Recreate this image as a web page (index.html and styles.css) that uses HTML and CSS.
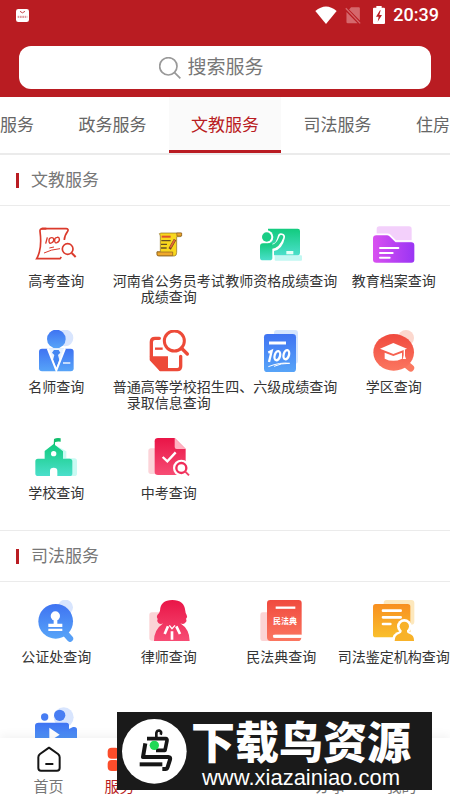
FILE: index.html
```
<!DOCTYPE html>
<html lang="zh-CN">
<head>
    <meta charset="UTF-8">
    <meta name="viewport" content="width=device-width, initial-scale=1.0">
    <title>服务</title>
    <link rel="stylesheet" href="styles.css">
</head>
<body>
    <svg class="defs" aria-hidden="true">
        <defs>
            <linearGradient id="green" x2="0" y2="1"><stop stop-color="#12cb7e"/><stop offset="1" stop-color="#4bdfcb"/></linearGradient>
            <linearGradient id="purple"><stop stop-color="#d950f0"/><stop offset="1" stop-color="#9a35f4"/></linearGradient>
            <linearGradient id="blue" x2="0" y2="1"><stop stop-color="#3f73f2"/><stop offset="1" stop-color="#57a4f8"/></linearGradient>
            <linearGradient id="red" x2="0" y2="1"><stop stop-color="#f04a3e"/><stop offset="1" stop-color="#fb7660"/></linearGradient>
            <linearGradient id="pink" x2="0" y2="1"><stop stop-color="#e91547"/><stop offset="1" stop-color="#f74c74"/></linearGradient>
            <linearGradient id="orange" x2="0" y2="1"><stop stop-color="#f88f20"/><stop offset="1" stop-color="#f9bf2c"/></linearGradient>
        </defs>
    </svg>

    <header class="header">
        <div class="status-bar">
            <svg class="app-icon" viewBox="0 0 39 39">
                <rect width="39" height="39" rx="7" fill="#fff"/>
                <path d="M12 7q7 9 15 0" fill="none" stroke="#c4474b" stroke-width="3"/>
                <path d="M5 22h29M5 25h29" stroke="#d98a8d" stroke-width="3" stroke-dasharray="5 2"/>
            </svg>
            <div class="status-right">
                <svg class="wifi" viewBox="0 0 66 54"><path d="M1 15Q33-12 65 15L33 54z" fill="#fff"/></svg>
                <svg class="sim" viewBox="0 0 48 52">
                    <path d="M18 1h24q3 0 3 3v37L12 8zM4 15l34 35H8q-4 0-4-4z" fill="#d5686c"/>
                    <path d="M2 4l44 46" stroke="#d5686c" stroke-width="4"/>
                </svg>
                <svg class="battery" viewBox="0 0 36 54">
                    <path d="M10 5V0h16v5h7q3 0 3 3v43q0 3-3 3H3q-3 0-3-3V8q0-3 3-3z" fill="#fff"/>
                    <path d="M21 13L9 32h8l-3 15 13-20h-8l4-14z" fill="#b91c22"/>
                </svg>
                <span class="time">20:39</span>
            </div>
        </div>
        <label class="search">
            <svg class="search-icon" viewBox="0 0 66 66"><circle cx="28" cy="28" r="26" fill="none" stroke="#999" stroke-width="5"/><path d="M46 46l18 18" stroke="#999" stroke-width="5"/></svg>
            <input type="text" placeholder="搜索服务" aria-label="搜索服务">
        </label>
    </header>

    <nav class="tabs">
        <a href="#">民生服务</a>
        <a href="#">政务服务</a>
        <a href="#education" class="active">文教服务</a>
        <a href="#justice">司法服务</a>
        <a href="#">住房服务</a>
    </nav>

    <main class="content">
        <section class="section" id="education">
            <h2>文教服务</h2>
            <div class="grid">
                <a href="#" class="item">
                    <svg viewBox="106 27 126 126" fill="none" stroke="#db3a2c" stroke-width="5">
                        <path d="M194 75q0-12 10-26 4-8-5-8h-70q-9 0-8 8 5 38-2 62-4 14-8 20h70l4-5"/>
                        <path d="M126 41h14" stroke-width="6"/>
                        <path d="M143 67l-5 19M155 68q-8 1-7 11 1 8 7 5 9-4 7-12-1-5-7-4zM172 67q-8 1-7 11 1 8 7 5 9-4 7-12-1-5-7-4z" stroke-width="4"/>
                        <path d="M149 99l14-3M133 114q22-11 48-13" stroke-width="3"/>
                        <circle cx="204" cy="102" r="16"/>
                        <path d="M216 114l12 12" stroke-width="6"/>
                    </svg>
                    <span>高考查询</span>
                </a>
                <a href="#" class="item">
                    <svg viewBox="443 27 126 126">
                        <path d="M482 54h61v8q0 4-6 3h-8v47q0 11-7 11h-48q-6-2-4-13h10V66q0-7-3-10z" fill="#f8d71e" stroke="#8a6a22" stroke-width="2"/>
                        <path d="M529 54h15v9h-14zM470 111h47v11h-46z" fill="#efa92b" stroke="#8a5a24" stroke-width="2"/>
                        <path d="M484 65h27" stroke="#de522a" stroke-width="6"/>
                        <path d="M483 77h28M482 88h18M482 99h17" stroke="#6a5120" stroke-width="4"/>
                        <path d="M524 74l-16 28" stroke="#754126" stroke-width="8"/>
                        <path d="M523 75l-13 23" stroke="#e76a31" stroke-width="5"/>
                    </svg>
                    <span>河南省公务员考试成绩查询</span>
                </a>
                <a href="#" class="item">
                    <svg viewBox="106 27 126 126">
                        <rect x="150" y="121" width="82" height="16" rx="3" fill="#c2f8f2"/>
                        <rect x="124" y="41" width="102" height="80" rx="7" fill="url(#green)"/>
                        <rect x="185" y="108" width="21" height="10" fill="#e6fff7"/>
                        <path d="M104 38h26v50h-26zM104 88h44v52h-44z" fill="#fff"/>
                        <path d="M146 97q18-3 24-31" fill="none" stroke="#fff" stroke-width="22" stroke-linecap="round"/>
                        <path d="M142 95q18-2 28-29" fill="none" stroke="#24cf8e" stroke-width="12" stroke-linecap="round"/>
                        <circle cx="126" cy="66" r="20" fill="#fff"/>
                        <circle cx="126" cy="66" r="14" fill="#1bcd86"/>
                        <path d="M115 85h28v43q0 8-8 8h-20q-9 0-9-8V94q0-9 9-9z" fill="url(#green)"/>
                    </svg>
                    <span>教师资格成绩查询</span>
                </a>
                <a href="#" class="item">
                    <svg viewBox="443 27 126 126">
                        <rect x="454" y="34" width="105" height="60" rx="8" fill="#f3d0fb"/>
                        <path d="M443 71q0-11 11-11h31q5 0 9 5l17 17h47q9 0 9 9v43q0 9-9 9H453q-10 0-10-9z" fill="url(#purple)"/>
                        <path d="M443 58h44q4 0 7 3l17 17h57" fill="none" stroke="#fff" stroke-width="5"/>
                        <path d="M464 99h55M464 114h38M464 128h29" stroke="#fff" stroke-width="6" stroke-linecap="round"/>
                    </svg>
                    <span>教育档案查询</span>
                </a>
                <a href="#" class="item">
                    <svg viewBox="106 30 126 126">
                        <circle cx="196" cy="54" r="25" fill="#d8e5fe"/>
                        <circle cx="170" cy="57" r="28" fill="url(#blue)"/>
                        <path d="M127 86h86q9 0 9 9v50q0 9-9 9h-86q-9 0-9-9V95q0-9 9-9z" fill="url(#blue)"/>
                        <path d="M144 85h51l-26 64z" fill="#e8f3ff"/>
                        <path d="M163 90h14l5 8-7 7 4 15-9 24-10-24 4-15-7-7z" fill="#4387f3"/>
                        <path d="M144 85l26 66 26-66" fill="none" stroke="#fff" stroke-width="6"/>
                        <path d="M190 129h22" stroke="#fff" stroke-width="4"/>
                    </svg>
                    <span>名师查询</span>
                </a>
                <a href="#" class="item">
                    <svg viewBox="443 30 126 126" fill="none" stroke="#ed4a38" stroke-width="10">
                        <path d="M477 55h-13q-11 0-11 11v53l28 30h50q10 0 10-10v-30" stroke-linecap="round" stroke-linejoin="round"/>
                        <path d="M448 109h55v43h-25z" fill="#ed4a38" stroke="none"/>
                        <path d="M464 86h23" stroke-width="7"/>
                        <circle cx="522" cy="63" r="30" stroke-width="9"/>
                        <path d="M543 84l18 18" stroke-width="10" stroke-linecap="round"/>
                    </svg>
                    <span>普通高等学校招生录取信息查询</span>
                </a>
                <a href="#" class="item">
                    <svg viewBox="106 30 126 126">
                        <rect x="148" y="30" width="72" height="101" rx="9" fill="#d5e5fe"/>
                        <rect x="118" y="42" width="96" height="114" rx="10" fill="url(#blue)"/>
                        <path d="M133 69h51" stroke="#fff" stroke-width="9"/>
                        <g fill="none" stroke="#fff" stroke-width="7">
                            <path d="M131 98l10-5-8 33"/>
                            <ellipse cx="158" cy="107" rx="8" ry="14" transform="rotate(15 158 107)"/>
                            <ellipse cx="185" cy="104" rx="8" ry="14" transform="rotate(15 185 104)"/>
                            <path d="M131 140q35-14 64-10-25-1-47 9" stroke-width="3"/>
                        </g>
                    </svg>
                    <span>四、六级成绩查询</span>
                </a>
                <a href="#" class="item">
                    <svg viewBox="443 30 126 126">
                        <circle cx="542" cy="54" r="24" fill="#fcd8ce"/>
                        <path d="M535 127l21 17" stroke="#fa7860" stroke-width="21" stroke-linecap="round"/>
                        <ellipse cx="505" cy="97" rx="61" ry="55" fill="url(#red)"/>
                        <path d="M464 86l40-17 41 17-41 16z" fill="#fff"/>
                        <path d="M478 98l26 10 26-10v18q-26 13-52 0z" fill="#fff"/>
                        <path d="M537 88v24" stroke="#fff" stroke-width="4"/>
                        <path d="M537 102l5 15h-10z" fill="#fff"/>
                    </svg>
                    <span>学区查询</span>
                </a>
                <a href="#" class="item">
                    <svg viewBox="106 33 126 126">
                        <path d="M167 61l33 18v21h24q8 0 8 8v38q0 7-8 7h-40z" fill="#c9faf3"/>
                        <path d="M163 42q9-5 20-2v10q-10-2-17 2v8h-4z" fill="#13be6d"/>
                        <path d="M162 57l28 22v22h20q8 0 8 8v37q0 7-8 7h-37v-16q0-9-11-9t-11 9v16h-35q-9 0-9-7v-37q0-8 8-8h20V78z" fill="url(#green)"/>
                        <circle cx="162" cy="86" r="8" fill="#fff"/>
                    </svg>
                    <span>学校查询</span>
                </a>
                <a href="#" class="item">
                    <svg viewBox="443 33 126 126">
                        <rect x="444" y="70" width="50" height="77" rx="8" fill="#fcd4d9"/>
                        <path d="M473 39h50l33 33v70q0 8-8 8h-75q-10 0-10-9V49q0-10 10-10z" fill="url(#pink)"/>
                        <path d="M523 39l33 33h-27q-6 0-6-6z" fill="#ffb2c1"/>
                        <path d="M487 96l14 13 25-27" fill="none" stroke="#fff" stroke-width="7"/>
                        <circle cx="543" cy="129" r="25" fill="#fff"/>
                        <circle cx="543" cy="129" r="15" fill="none" stroke="#f02d5a" stroke-width="7"/>
                        <path d="M554 139l12 12" stroke="#f24167" stroke-width="6"/>
                    </svg>
                    <span>中考查询</span>
                </a>
            </div>
        </section>

        <section class="section" id="justice">
            <h2>司法服务</h2>
            <div class="grid">
                <a href="#" class="item">
                    <svg viewBox="106 30 126 126">
                        <circle cx="197" cy="52" r="23" fill="#d8e5fe"/>
                        <path d="M197 130l14 16" stroke="#569ff7" stroke-width="19" stroke-linecap="round"/>
                        <circle cx="168" cy="94" r="52" fill="url(#blue)"/>
                        <circle cx="167" cy="78" r="14" fill="#fff"/>
                        <path d="M162 87h11v14h15v10h-42v-10h16zM146 116h42v7h-42z" fill="#fff"/>
                    </svg>
                    <span>公证处查询</span>
                </a>
                <a href="#" class="item">
                    <svg viewBox="443 30 126 126">
                        <rect x="447" y="67" width="50" height="85" rx="8" fill="#fbd4d6"/>
                        <path d="M479 62q1-32 37-32t39 33q0 6 4 12 4 7-2 12 4 7-3 12-5 5-14 1 28 18 28 53H461q0-34 28-53-9 4-15-1-6-6-2-12-5-5-1-12 7-7 8-13z" fill="url(#pink)"/>
                        <path d="M503 109l-10 23M528 109l11 23M515 124v25" stroke="#fff" stroke-width="8"/>
                        <path d="M507 106l8 10 9-10" fill="none" stroke="#fff" stroke-width="4"/>
                    </svg>
                    <span>律师查询</span>
                </a>
                <a href="#" class="item">
                    <svg viewBox="106 30 126 126">
                        <rect x="107" y="67" width="40" height="86" rx="7" fill="#fcd4d5"/>
                        <path d="M137 30h85q9 0 9 9v95h-78q-9 0-9 4t9 5h77q-1 10-10 10h-82q-11 0-11-11V40q0-10 10-10z" fill="url(#red)"/>
                        <path d="M146 139h84" stroke="#fff" stroke-width="9"/>
                        <path d="M153 53h59" stroke="#fff" stroke-width="7"/>
                        <text class="book-text" x="181" y="103" text-anchor="middle">民法典</text>
                    </svg>
                    <span>民法典查询</span>
                </a>
                <a href="#" class="item">
                    <svg viewBox="443 30 126 126">
                        <rect x="475" y="30" width="92" height="74" rx="9" fill="#fde8bd"/>
                        <rect x="443" y="42" width="112" height="100" rx="8" fill="url(#orange)"/>
                        <path d="M473 62h53M473 82h53M473 102h22" stroke="#fff" stroke-width="8" stroke-linecap="round"/>
                        <circle cx="537" cy="109" r="22" fill="#fff"/>
                        <path d="M500 156q0-28 24-32h26q20 5 20 32z" fill="#fff"/>
                        <circle cx="537" cy="109" r="14" fill="#f8b229"/>
                        <path d="M529 116h16v9q0 5 7 6 14 4 14 20v2h-58q0-18 14-22 7-2 7-7z" fill="#f8b229"/>
                    </svg>
                    <span>司法鉴定机构查询</span>
                </a>
                <a href="#" class="item" aria-label="视频">
                    <svg viewBox="106 18 126 126">
                        <circle cx="192" cy="52" r="30" fill="#d8e5fe"/>
                        <circle cx="135" cy="51" r="11" fill="#477df3"/>
                        <circle cx="180" cy="46" r="17" fill="#477df3"/>
                        <path d="M117 68h83q8 0 8 8v11l12-6q12-2 12 8v46q-5 6-24-7-1 12-10 12h-82q-10 0-10-10V77q0-9 11-9z" fill="url(#blue)"/>
                        <path d="M149 83l31 21-31 20z" fill="#fff"/>
                    </svg>
                </a>
            </div>
        </section>
    </main>

    <nav class="bottom-nav">
        <a href="#">
            <svg viewBox="0 0 78 78" fill="none" stroke="#151515" stroke-width="6" stroke-linejoin="round">
                <path d="M39 5L12 24q-5 4-5 10v32q0 8 8 8h48q8 0 8-8V34q0-6-5-10z"/>
                <path d="M28 54h24"/>
            </svg>
            <span>首页</span>
        </a>
        <a href="#" class="active">
            <svg viewBox="0 0 78 78" fill="#fb4d2b">
                <rect x="2" y="5" width="35" height="33" rx="12"/>
                <rect x="41" y="5" width="35" height="33" rx="12"/>
                <rect x="2" y="42" width="35" height="33" rx="12"/>
                <rect x="41" y="42" width="35" height="33" rx="12"/>
            </svg>
            <span>服务</span>
        </a>
        <a href="#" class="push">
            <svg viewBox="0 0 78 78" fill="none" stroke="#151515" stroke-width="6"><rect x="10" y="6" width="58" height="66" rx="8"/></svg>
            <span>办事</span>
        </a>
        <a href="#">
            <svg viewBox="0 0 78 78" fill="none" stroke="#151515" stroke-width="6"><circle cx="39" cy="24" r="17"/><path d="M8 72q0-25 31-25t31 25z"/></svg>
            <span>我的</span>
        </a>
    </nav>

    <div class="watermark">
        <svg viewBox="0 0 195 195">
            <circle cx="97" cy="97" r="97" fill="#fff"/>
            <g fill="none" stroke="#161616" stroke-width="11" stroke-linejoin="round">
                <path d="M103 55V42q2-9 10-7 7 3 3 12" stroke-width="8"/>
                <path d="M75 59h56q5 0 4 6l-6 29h-27"/>
                <path d="M70 73l-7 41h76q7 0 5 8l-7 22q-2 7-9 6h-7" stroke-width="12"/>
                <path d="M53 136h68" stroke-width="12"/>
            </g>
            <circle cx="97" cy="79" r="14" fill="#20d856"/>
        </svg>
        <div class="watermark-text">
            <strong>下载鸟资源</strong>
            <span>www.xiazainiao.com</span>
        </div>
    </div>
</body>
</html>
```
FILE: styles.css
```
* {
    box-sizing: border-box;
}
body {
    font-family: Roboto, "Noto Sans CJK SC", sans-serif;
    margin: 0;
    height: 100vh;
    display: flex;
    flex-direction: column;
    position: relative;
    overflow: hidden;
    background-color: #fff;
    color: #333;
}
a {
    color: inherit;
    text-decoration: none;
}
svg {
    display: block;
    flex: none;
}
.defs {
    position: absolute;
    width: 0;
    height: 0;
}

/* header */
.header {
    flex: none;
    padding: 0 19px 8px;
    background-color: #b91c22;
}
.status-bar {
    display: flex;
    align-items: center;
    justify-content: space-between;
    height: 30px;
    margin: 0 -8px 16px -3px;
    color: #fff;
}
.status-right {
    display: flex;
    align-items: center;
    gap: 8px;
}
.app-icon {
    width: 13px;
    height: 13px;
}
.wifi {
    width: 22px;
    height: 18px;
}
.sim {
    width: 16px;
    height: 17px;
}
.battery {
    width: 12px;
    height: 18px;
    margin-left: 4px;
}
.time {
    font-size: 18px;
    font-weight: 500;
    line-height: 30px;
}
.search {
    display: flex;
    align-items: center;
    justify-content: center;
    gap: 7px;
    height: 43px;
    padding-right: 28px;
    border-radius: 12px;
    background-color: #fff;
}
.search-icon {
    width: 22px;
    height: 22px;
}
.search input {
    width: 76px;
    padding: 0;
    border: 0;
    outline: 0;
    background: none;
    font: inherit;
    font-size: 19px;
    color: #333;
}
.search input::placeholder {
    color: #777;
}

/* category tabs */
.tabs {
    flex: none;
    display: flex;
    justify-content: center;
    overflow: hidden;
    border-bottom: 2px solid #ebebeb;
    color: #666;
}
.tabs a {
    flex: 0 0 25%;
    height: 56px;
    border-bottom: 3px solid transparent;
    font-size: 17px;
    line-height: 57px;
    text-align: center;
}
.tabs .active {
    color: #b91c22;
    background-color: #fafafa;
    border-color: #b91c22;
}

/* service sections */
.content {
    flex: 1;
    min-height: 0;
    overflow: hidden;
}
.section + .section {
    border-top: 1px solid #ebebeb;
}
.section h2 {
    display: flex;
    align-items: center;
    gap: 12px;
    margin: 0;
    padding-left: 16px;
    border-bottom: 1px solid #ebebeb;
    font-size: 17px;
    font-weight: 400;
    line-height: 50px;
    color: #777;
}
.section h2::before {
    content: "";
    width: 3px;
    height: 15px;
    background-color: #b91c22;
}
.grid {
    display: grid;
    grid-template-columns: repeat(4, 1fr);
    grid-auto-rows: 106px;
    padding-top: 6px;
}
.item {
    display: flex;
    flex-direction: column;
    align-items: center;
    gap: 7px;
    padding-top: 12px;
    font-size: 14px;
    line-height: 16px;
    text-align: center;
}
.item svg {
    width: 42px;
    height: 42px;
}
.book-text {
    font-family: "Liberation Serif", "Noto Sans CJK SC", serif;
    font-size: 24px;
    font-weight: 700;
    fill: #fff;
}

/* bottom navigation */
.bottom-nav {
    flex: none;
    display: flex;
    position: relative;
    padding: 8px 13px 3px;
    background-color: #fff;
    box-shadow: 0 -2px 10px rgba(0, 0, 0, 0.06);
    font-size: 15px;
    line-height: 20px;
    color: #777;
}
.bottom-nav a {
    display: flex;
    flex-direction: column;
    align-items: center;
    gap: 5px;
    width: 71px;
}
.bottom-nav svg {
    width: 26px;
    height: 26px;
}
.bottom-nav .active {
    color: #b91c22;
}
.bottom-nav .push {
    margin-left: auto;
}

/* watermark over the bottom bar */
.watermark {
    position: absolute;
    right: 18px;
    bottom: 10px;
    display: flex;
    align-items: center;
    gap: 4px;
    width: 315px;
    height: 78px;
    padding-left: 5px;
    background-color: #1a1a1a;
    color: #fff;
}
.watermark svg {
    width: 65px;
    height: 65px;
}
.watermark-text {
    display: flex;
    flex-direction: column;
    align-items: center;
    padding-top: 6px;
    white-space: nowrap;
}
.watermark strong {
    font-size: 44px;
    font-weight: 900;
    line-height: 48px;
}
.watermark span {
    font-family: "Liberation Sans", sans-serif;
    font-size: 22px;
    line-height: 20px;
}
```
